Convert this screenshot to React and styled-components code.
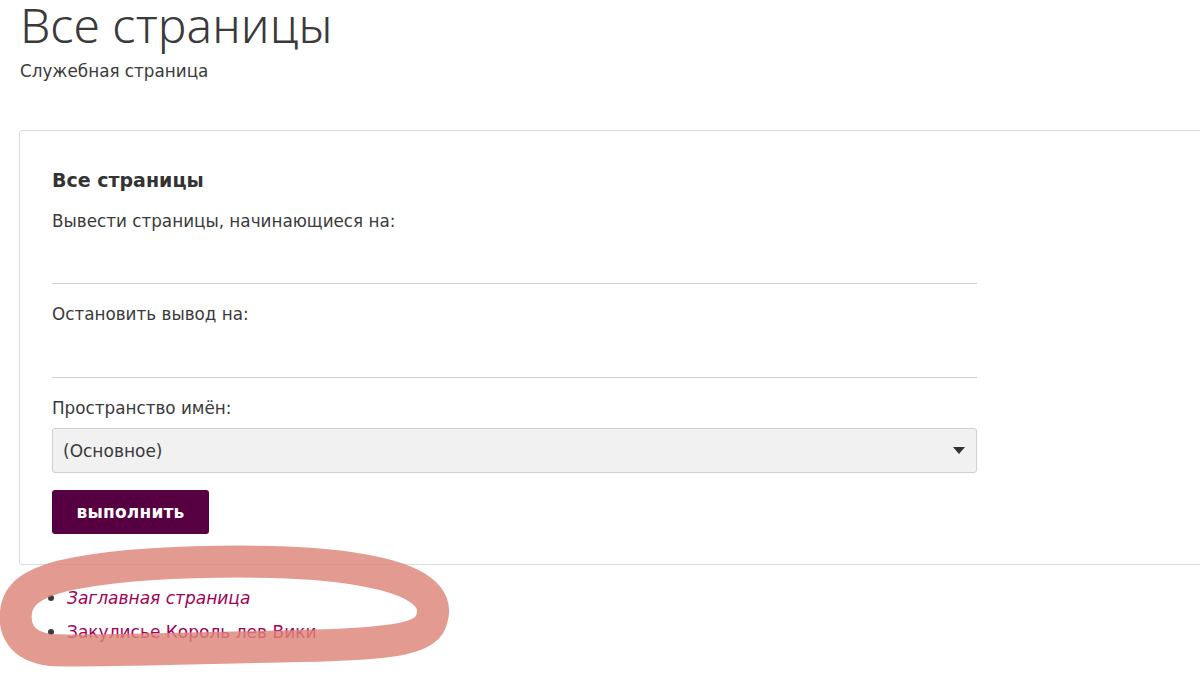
import React from "react";
import styled, { createGlobalStyle } from "styled-components";

const GlobalStyle = createGlobalStyle`
  html, body {
    margin: 0;
    padding: 0;
    background: #ffffff;
    overflow: hidden;
  }
  body {
    font-family: "DejaVu Sans", "Noto Sans", sans-serif;
    color: #3a3a3a;
  }
`;

const Page = styled.div`
  position: relative;
  width: 1200px;
  height: 681px;
  overflow: hidden;
  padding: 0 0 0 19px;
  box-sizing: border-box;
`;

const Title = styled.h1`
  margin: 0;
  padding: 0 0 0 1px;
  font-family: "Noto Sans", "Open Sans", sans-serif;
  font-size: 48px;
  font-weight: 300;
  line-height: 50px;
  color: #3a3a3a;
  letter-spacing: 0.2px;
`;

const Subtitle = styled.div`
  margin: 10px 0 0 1px;
  font-size: 16.8px;
  line-height: 22px;
  color: #3a3a3a;
`;

const Panel = styled.form`
  margin-top: 48px;
  width: 1200px;
  height: 435px;
  box-sizing: border-box;
  border: 1px solid #dcdcdc;
  border-radius: 3px;
  padding: 36px 0 0 32px;
`;

const PanelTitle = styled.div`
  font-size: 19px;
  font-weight: 700;
  line-height: 26px;
  color: #333;
`;

const Label = styled.div`
  margin-top: ${p => p.$top}px;
  font-size: 16.8px;
  line-height: 22px;
  color: #3a3a3a;
`;

const LineInput = styled.input`
  display: block;
  width: 925px;
  height: 41px;
  margin-top: ${p => p.$top}px;
  padding: 0;
  border: none;
  border-bottom: 1px solid #cfcfcf;
  background: transparent;
  outline: none;
  font: inherit;
`;

const SelectBox = styled.div`
  display: flex;
  align-items: center;
  justify-content: space-between;
  width: 925px;
  height: 45px;
  margin-top: 9px;
  padding: 0 10px;
  box-sizing: border-box;
  background: #f1f1f1;
  border: 1px solid #d0d0d0;
  border-radius: 3px;
  font-size: 17px;
  color: #3a3a3a;
`;

const Arrow = styled.span`
  width: 0;
  height: 0;
  margin-right: 1px;
  border-left: 6px solid transparent;
  border-right: 6px solid transparent;
  border-top: 7px solid #333;
`;

const SubmitButton = styled.button`
  display: block;
  margin-top: 17px;
  width: 157px;
  height: 44px;
  border: none;
  border-radius: 3px;
  background: #560041;
  color: #fff;
  font-family: "DejaVu Sans", "Noto Sans", sans-serif;
  font-size: 17px;
  font-weight: 700;
  letter-spacing: 0.2px;
`;

const PageList = styled.ul`
  margin: 16px 0 0;
  padding: 0 0 0 48px;
  list-style: disc;
  color: #3a3a3a;
`;

const Item = styled.li`
  font-size: 17px;
  line-height: 33px;

  &::marker {
    font-size: 20px;
  }
`;

const PageLink = styled.a`
  color: #a00057;
  text-decoration: none;
  font-style: ${p => (p.$italic ? "italic" : "normal")};
`;

const Marker = styled.svg`
  position: absolute;
  left: 0;
  top: 540px;
  pointer-events: none;
`;

export default function App() {
  return (
    <Page>
      <GlobalStyle />
      <Title>Все страницы</Title>
      <Subtitle>Служебная страница</Subtitle>

      <Panel onSubmit={e => e.preventDefault()}>
        <PanelTitle>Все страницы</PanelTitle>
        <Label $top={17}>Вывести страницы, начинающиеся на:</Label>
        <LineInput type="text" $top={10} />
        <Label $top={19}>Остановить вывод на:</Label>
        <LineInput type="text" $top={11} />
        <Label $top={19}>Пространство имён:</Label>
        <SelectBox>
          <span>(Основное)</span>
          <Arrow />
        </SelectBox>
        <SubmitButton type="submit">выполнить</SubmitButton>
      </Panel>

      <PageList>
        <Item>
          <PageLink href="#" $italic>Заглавная страница</PageLink>
        </Item>
        <Item>
          <PageLink href="#">Закулисье Король лев Вики</PageLink>
        </Item>
      </PageList>

      <Marker width="470" height="141" viewBox="0 0 470 141">
        <path
          d="M62 36 C140 18 300 18 362 30 C420 40 438 58 432 78 C428 98 400 104 300 106 C200 108 90 112 50 110 C20 106 14 88 16 72 C18 54 32 44 62 36 Z"
          fill="none"
          stroke="#dd8479"
          strokeOpacity="0.82"
          strokeWidth="32"
          strokeLinejoin="round"
        />
      </Marker>
    </Page>
  );
}
